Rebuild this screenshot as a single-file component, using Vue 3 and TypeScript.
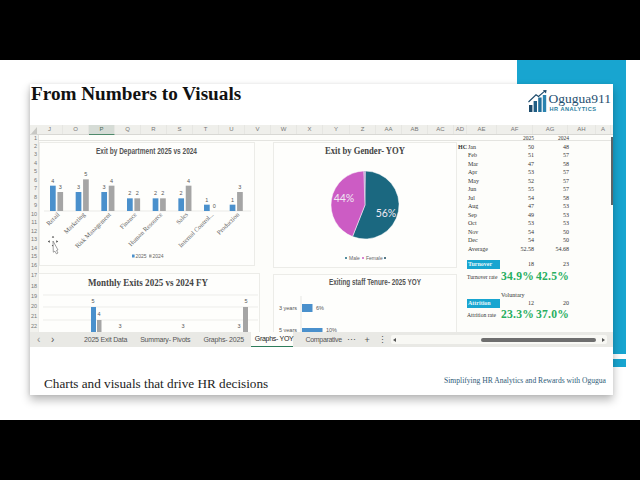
<template>
  <div class="page">
    <div class="black-bar"></div>
    <div class="stage">
      <div class="blue-main"></div>
      <div class="blue-small"></div>

      <div class="slide">
        <!-- header -->
        <header class="slide-head">
          <h1>From Numbers to Visuals</h1>
          <div class="logo">
            <svg width="21" height="22" viewBox="0 0 21 22">
              <rect x="1" y="15" width="3.4" height="7" fill="#1c4a6b" />
              <rect x="5.6" y="11" width="3.4" height="11" fill="#1f5d84" />
              <rect x="10.2" y="7.5" width="3.4" height="14.5" fill="#23709b" />
              <rect x="14.8" y="5" width="3.4" height="17" fill="#2a83b0" />
              <path d="M0.5 12 L8 4.8 L10.5 6.5 L17 0.8" fill="none" stroke="#1c4a6b" stroke-width="1.1" />
              <path d="M14.8 0.2 L18.6 0 L18 3.6 Z" fill="#1c4a6b" />
            </svg>
            <div class="logo-text">
              <div class="logo-name">Ogugua911</div>
              <div class="logo-sub">HR ANALYTICS</div>
            </div>
          </div>
        </header>

        <!-- spreadsheet -->
        <div class="sheet">
          <div class="col-head">
            <div class="corner"></div>
            <div
              v-for="c in columns"
              :key="c.name"
              class="col"
              :class="{ selected: c.name === 'P' }"
              :style="{ width: c.width + 'px' }"
            >{{ c.name }}</div>
          </div>

          <div class="sheet-body">
            <div class="row-nums">
              <div
                v-for="n in 22"
                :key="n"
                class="row-num"
                :class="{ first: n === 1, tall: n > 16, gap: n === 17 }"
              >{{ n }}</div>
            </div>

            <div class="cells">
              <div class="charts">
                <div class="chart-col left">
                  <div class="chart dept">
                    <svg width="216" height="124" viewBox="0 0 216 124">
                      <text x="107.5" y="12" class="title-sans" text-anchor="middle" textLength="101" lengthAdjust="spacingAndGlyphs">Exit by Department 2025 vs 2024</text>
                      <line x1="5" x2="212" y1="69" y2="69" stroke="#e2e2de" stroke-width="0.7" />
                      <g v-for="(d, i) in departments" :key="d.name">
                        <rect :x="11 + i * 25.67" :y="69 - d.a * 6.33" width="5.7" :height="d.a * 6.33" fill="#4a90cc" />
                        <rect :x="18.4 + i * 25.67" :y="69 - d.b * 6.33" width="5.7" :height="d.b * 6.33" fill="#a5a5a5" />
                        <text :x="13.8 + i * 25.67" :y="66 - d.a * 6.33" class="val" text-anchor="middle">{{ d.a }}</text>
                        <text :x="21.2 + i * 25.67" :y="66 - d.b * 6.33" class="val" text-anchor="middle">{{ d.b }}</text>
                        <text
                          class="axis"
                          text-anchor="end"
                          :transform="`translate(${21 + i * 25.67} 73) rotate(-45)`"
                        >{{ d.name }}</text>
                      </g>
                      <rect x="93" y="112.5" width="2.6" height="3" fill="#4a90cc" />
                      <text x="96.5" y="116" class="legend">2025</text>
                      <rect x="110" y="112.5" width="2.6" height="3" fill="#a5a5a5" />
                      <text x="113.5" y="116" class="legend">2024</text>
                      <!-- mouse cursor -->
                      <g fill="#222">
                        <path d="M14 94 l1.2 1.6 h-2.4 Z" />
                        <path d="M14 104.5 l1.2 -1.6 h-2.4 Z" />
                        <path d="M9 99.5 l1.6 -1.2 v2.4 Z" />
                        <path d="M19 99.5 l-1.6 -1.2 v2.4 Z" />
                      </g>
                      <path d="M14 99 l5 9 l-1.5 .5 l1.5 2.5 l-1.6 .8 l-1.5 -2.6 l-1.6 1 Z" fill="#fff" stroke="#777" stroke-width="0.7" />
                    </svg>
                  </div>
                  <div class="chart monthly">
                    <svg width="222" height="70" viewBox="0 0 222 70">
                      <text x="110" y="13" class="title-serif-small" text-anchor="middle" textLength="120" lengthAdjust="spacingAndGlyphs">Monthly Exits 2025 vs 2024 FY</text>
                      <line v-for="y in [22, 34, 47]" :key="y" x1="5" x2="220" :y1="y" :y2="y" stroke="#e6e6e2" stroke-width="0.7" />
                      <rect x="53" y="34" width="5" height="30" fill="#4a90cc" />
                      <rect x="59" y="47" width="4.5" height="20" fill="#a5a5a5" />
                      <rect x="205" y="34" width="5" height="30" fill="#a5a5a5" />
                      <text x="55" y="30" class="val" text-anchor="middle">5</text>
                      <text x="61" y="43" class="val" text-anchor="middle">4</text>
                      <text x="82" y="55" class="val" text-anchor="middle">3</text>
                      <text x="145" y="55" class="val" text-anchor="middle">3</text>
                      <text x="201" y="55" class="val" text-anchor="middle">3</text>
                      <text x="208" y="30" class="val" text-anchor="middle">5</text>
                    </svg>
                  </div>
                </div>

                <div class="chart-col right">
                  <div class="chart gender">
                    <svg width="184" height="126" viewBox="0 0 184 126">
                      <text x="92" y="12" class="title-serif" text-anchor="middle" textLength="80" lengthAdjust="spacingAndGlyphs">Exit by Gender- YOY</text>
                      <path d="M92 63 L92 29 A34 34 0 1 1 79.5 94.6 Z" fill="#1b6880" stroke="#fff" stroke-width="0.5" />
                      <path d="M92 63 L79.5 94.6 A34 34 0 0 1 90.8 29 Z" fill="#cc5cc4" stroke="#fff" stroke-width="0.5" />
                      <path d="M92 63 L90.8 29 A34 34 0 0 1 92.9 29 Z" fill="#c9b9dc" />
                      <text x="71" y="60" class="pie-label" text-anchor="middle">44%</text>
                      <text x="113" y="75" class="pie-label" text-anchor="middle">56%</text>
                      <circle cx="73" cy="116" r="1" fill="#1b6880" />
                      <text x="76" y="118" class="legend">Male</text>
                      <circle cx="90" cy="116" r="1" fill="#cc5cc4" />
                      <text x="93" y="118" class="legend">Female</text>
                      <circle cx="112" cy="116" r="1" fill="#1b4a5c" />
                    </svg>
                  </div>
                  <div class="chart tenure">
                    <svg width="184" height="70" viewBox="0 0 184 70">
                      <text x="102" y="11" class="title-sans" text-anchor="middle" textLength="92" lengthAdjust="spacingAndGlyphs">Exiting staff Tenure- 2025 YOY</text>
                      <line x1="28" x2="28" y1="22" y2="70" stroke="#dcdcd8" stroke-width="0.7" />
                      <rect x="29" y="30" width="10.5" height="8" fill="#4a90cc" />
                      <rect x="29" y="54" width="20.5" height="12" fill="#4a90cc" />
                      <text x="43" y="36" class="val">6%</text>
                      <text x="53" y="57.5" class="val">10%</text>
                      <text x="24" y="36" class="val" text-anchor="end">3 years</text>
                      <text x="24" y="57.5" class="val" text-anchor="end">5 years</text>
                    </svg>
                  </div>
                </div>
              </div>

              <!-- HC table -->
              <div class="table">
                <div class="t-row years">
                  <span></span><span></span><span class="num">2025</span><span class="num">2024</span>
                </div>
                <div v-for="(m, i) in months" :key="m.name" class="t-row">
                  <span class="hc">{{ i === 0 ? 'HC' : '' }}</span>
                  <span>{{ m.name }}</span>
                  <span class="num">{{ m.a }}</span>
                  <span class="num">{{ m.b }}</span>
                </div>
                <div class="t-row">
                  <span></span><span>Average</span><span class="num">52.58</span><span class="num">54.68</span>
                </div>

                <div class="t-row rate-top turnover">
                  <span class="chip">Turnover</span>
                  <span class="num">18</span><span class="num">23</span>
                </div>
                <div class="t-row rate">
                  <span class="rate-name">Turnover rate</span>
                  <span class="pct">34.9%</span><span class="pct">42.5%</span>
                </div>
                <div class="voluntary">Voluntary</div>
                <div class="t-row rate-top">
                  <span class="chip">Attrition</span>
                  <span class="num">12</span><span class="num">20</span>
                </div>
                <div class="t-row rate attrition">
                  <span class="rate-name">Attrition rate</span>
                  <span class="pct">23.3%</span><span class="pct">37.0%</span>
                </div>
              </div>
            </div>

            <div class="v-scroll"></div>
          </div>

          <!-- sheet tabs -->
          <div class="tab-bar">
            <span class="nav">‹</span>
            <span class="nav second">›</span>
            <span class="tab">2025 Exit Data</span>
            <span class="tab">Summary- Pivots</span>
            <span class="tab tight">Graphs- 2025</span>
            <span class="tab active">Graphs- YOY</span>
            <span class="tab last">Comparative</span>
            <span class="tool">⋯</span>
            <span class="tool">+</span>
            <span class="tool">⋮</span>
            <div class="h-scroll">
              <span class="arrow-left"></span>
              <span class="thumb"></span>
              <span class="arrow-right"></span>
            </div>
          </div>
        </div>

        <footer class="slide-foot">
          <span class="tagline">Charts and visuals that drive HR decisions</span>
          <span class="credit">Simplifying HR Analytics and Rewards with Ogugua</span>
        </footer>
      </div>
    </div>
    <div class="black-bar"></div>
  </div>
</template>

<script setup lang="ts">
const columns = [
  { name: 'J', width: 26 }, { name: 'O', width: 26 }, { name: 'P', width: 26 },
  { name: 'Q', width: 26 }, { name: 'R', width: 26 }, { name: 'S', width: 26 },
  { name: 'T', width: 26 }, { name: 'U', width: 26 }, { name: 'V', width: 26 },
  { name: 'W', width: 26 }, { name: 'X', width: 26 }, { name: 'Y', width: 27 },
  { name: 'Z', width: 26 }, { name: 'AA', width: 26 }, { name: 'AB', width: 26 },
  { name: 'AC', width: 26 }, { name: 'AD', width: 13 }, { name: 'AE', width: 30 },
  { name: 'AF', width: 36 }, { name: 'AG', width: 35 }, { name: 'AH', width: 28 },
  { name: 'A', width: 15 },
]

const departments = [
  { name: 'Retail', a: 4, b: 3 },
  { name: 'Marketing', a: 3, b: 5 },
  { name: 'Risk Management', a: 3, b: 4 },
  { name: 'Finance', a: 2, b: 2 },
  { name: 'Human Resource', a: 2, b: 2 },
  { name: 'Sales', a: 2, b: 4 },
  { name: 'Internal Control...', a: 1, b: 0 },
  { name: 'Production', a: 1, b: 3 },
]

const months = [
  { name: 'Jan', a: 50, b: 48 },
  { name: 'Feb', a: 51, b: 57 },
  { name: 'Mar', a: 47, b: 58 },
  { name: 'Apr', a: 53, b: 57 },
  { name: 'May', a: 52, b: 57 },
  { name: 'Jun', a: 55, b: 57 },
  { name: 'Jul', a: 54, b: 58 },
  { name: 'Aug', a: 47, b: 53 },
  { name: 'Sep', a: 49, b: 53 },
  { name: 'Oct', a: 53, b: 53 },
  { name: 'Nov', a: 54, b: 50 },
  { name: 'Dec', a: 54, b: 50 },
]
</script>

<style>
html, body {
  margin: 0;
  background: #000;
}
</style>

<style scoped>
.page {
  width: 640px;
  height: 480px;
  display: flex;
  flex-direction: column;
  overflow: hidden;
  font-family: "Liberation Sans", Arial, sans-serif;
}

.black-bar {
  height: 60px;
  background: #000;
}

.stage {
  position: relative;
  height: 360px;
  background: #fff;
  padding: 24px 0 0 30px;
  box-sizing: border-box;
}

.blue-main {
  position: absolute;
  left: 517px;
  top: 0;
  width: 109px;
  height: 294px;
  background: #18a5d0;
}

.blue-small {
  position: absolute;
  left: 613px;
  top: 299px;
  width: 13px;
  height: 8px;
  background: #18a5d0;
}

.slide {
  position: relative;
  width: 583px;
  height: 311px;
  background: #fff;
  box-shadow: 0 5px 9px rgba(0, 0, 0, 0.28), -1px 0 3px rgba(0, 0, 0, 0.08);
  display: flex;
  flex-direction: column;
}

.slide-head {
  height: 41px;
  display: flex;
  justify-content: space-between;
  align-items: flex-start;
  flex: none;
}

.slide-head h1 {
  margin: 0;
  padding: 0 0 0 1px;
  font-family: "Liberation Serif", serif;
  font-weight: 700;
  font-size: 19.2px;
  line-height: 20px;
  color: #111;
}

.logo {
  display: flex;
  align-items: flex-start;
  padding: 6px 2px 0 0;
}

.logo-name {
  font-family: "Liberation Serif", serif;
  font-size: 13.5px;
  line-height: 14px;
  color: #1f4f70;
  margin-top: 2px;
}

.logo-sub {
  font-size: 5.6px;
  line-height: 6px;
  letter-spacing: 0.5px;
  color: #2b7d9e;
  font-weight: 700;
  padding-left: 1px;
}

.sheet {
  height: 222px;
  flex: none;
  display: flex;
  flex-direction: column;
  background: #fdfdfa;
  overflow: hidden;
}

.col-head {
  height: 10px;
  display: flex;
  flex: none;
  background: #efefeb;
  border-bottom: 1px solid #d8d8d4;
  box-sizing: border-box;
}

.corner {
  width: 7px;
  flex: none;
  box-sizing: border-box;
  margin-top: 2px;
  height: 7px;
  border-right: 6px solid #c8c8c4;
  border-top: 7px solid transparent;
}

.col {
  flex: none;
  font-size: 6px;
  line-height: 9px;
  text-align: center;
  color: #777;
  box-sizing: border-box;
  border-right: 1px solid #e6e6e2;
}

.col.selected {
  background: #d6dcd6;
  border-bottom: 1px solid #4f8a6b;
  height: 10px;
  color: #4a6a58;
}

.sheet-body {
  position: relative;
  flex: 1;
  min-height: 0;
  display: flex;
  overflow: hidden;
}

.row-nums {
  width: 8px;
  flex: none;
  background: #f2f2ee;
  border-right: 1px solid #e0e0dc;
}

.row-num {
  height: 8.5px;
  font-size: 5.5px;
  line-height: 8.5px;
  text-align: right;
  padding-right: 1px;
  color: #777;
  overflow: hidden;
}

.row-num.first {
  height: 6.5px;
  line-height: 6.5px;
}

.row-num.tall {
  height: 10px;
  line-height: 10px;
}

.row-num.gap {
  height: 12px;
  line-height: 12px;
}

.cells {
  flex: 1;
  display: flex;
  padding-top: 7px;
  background: linear-gradient(#e4e4e0, #e4e4e0) 0 5px / 100% 1px no-repeat;
}

.charts {
  display: flex;
  width: 418px;
  flex: none;
}

.chart-col {
  display: flex;
  flex-direction: column;
}

.chart-col.left {
  width: 234px;
  flex: none;
}

.chart-col.right {
  width: 184px;
  flex: none;
}

.chart {
  flex: none;
  background: #fefefc;
  border: 1px solid #ecece8;
  box-sizing: border-box;
  overflow: hidden;
}

.chart svg {
  display: block;
  margin: -1px;
}

.dept {
  width: 216px;
  height: 124px;
}

.monthly {
  width: 222px;
  margin-top: 7px;
  height: 70px;
  margin-left: -1px;
}

.gender {
  height: 126px;
}

.tenure {
  margin-top: 6px;
  height: 70px;
}

.title-sans {
  font-family: "Liberation Sans", sans-serif;
  font-weight: 700;
  font-size: 8.8px;
  fill: #555;
}

.title-serif {
  font-family: "Liberation Serif", serif;
  font-weight: 700;
  font-size: 10px;
  fill: #444;
}

.title-serif-small {
  font-family: "Liberation Serif", serif;
  font-weight: 700;
  font-size: 9.6px;
  fill: #444;
}

.val {
  font-family: "Liberation Sans", sans-serif;
  font-size: 5.5px;
  fill: #555;
}

.axis {
  font-family: "Liberation Serif", serif;
  font-size: 6.5px;
  fill: #666;
}

.legend {
  font-family: "Liberation Sans", sans-serif;
  font-size: 5px;
  fill: #666;
}

.pie-label {
  font-family: Lato, sans-serif;
  font-size: 10.5px;
  fill: #f0e9f2;
}

.table {
  width: 155px;
  flex: none;
  margin-top: -7px;
  font-family: "Liberation Serif", serif;
  font-size: 6px;
  color: #333;
}

.t-row {
  display: grid;
  grid-template-columns: 11px 38px 28px 35px;
  height: 8.5px;
  line-height: 8.5px;
  align-items: center;
}

.years {
  height: 7.5px;
  line-height: 7.5px;
  font-size: 5.5px;
}

.hc {
  font-weight: 700;
  padding-left: 1px;
}

.num {
  text-align: right;
}

.rate-top {
  grid-template-columns: 33px 34px 35px;
  margin-left: 10px;
  height: 9px;
  line-height: 9px;
}

.turnover {
  margin-top: 6.5px;
}

.chip {
  background: #18a5d0;
  color: #e8f7fb;
  font-size: 6px;
  font-weight: 700;
  height: 9px;
  padding-left: 1px;
}

.rate {
  grid-template-columns: 34px 33px 35px;
  margin-left: 10px;
  height: 14px;
  line-height: 14px;
  margin-top: 1px;
}

.rate.attrition {
  margin-top: 0;
}

.rate-name {
  font-size: 5.6px;
  white-space: nowrap;
}

.pct {
  font-size: 11.6px;
  font-weight: 700;
  color: #27ae60;
  text-align: right;
  letter-spacing: 0.2px;
}

.voluntary {
  height: 10px;
  line-height: 10px;
  margin: 6px 0 -1px;
  padding-left: 44px;
}

.v-scroll {
  position: absolute;
  right: 0;
  top: 2px;
  width: 2px;
  height: 68px;
  background: #5c6468;
}

.tab-bar {
  height: 15px;
  flex: none;
  background: #e9e9e5;
  display: flex;
  align-items: center;
  font-size: 7px;
  letter-spacing: -0.2px;
  color: #555;
  padding-left: 7px;
  box-sizing: border-box;
  white-space: nowrap;
}

.nav {
  width: 14px;
  font-size: 10px;
  line-height: 14px;
  color: #888;
}

.nav.second {
  width: 33px;
  color: #555;
}

.tab {
  margin-right: 13px;
}

.tab.tight {
  margin-right: 11px;
}

.tab.active {
  background: #fdfdfa;
  height: 15px;
  line-height: 14px;
  color: #222;
  border-bottom: 1px solid #2e7d5b;
  box-sizing: border-box;
  margin: 0 12px 0 -4px;
  padding: 0 0 0 4px;
  letter-spacing: -0.3px;
}

.tab.last {
  margin-right: 2px;
  letter-spacing: -0.3px;
}

.tool {
  width: 15.5px;
  flex: none;
  text-align: center;
  font-size: 9px;
  color: #555;
}

.h-scroll {
  margin-left: 1px;
  width: 216px;
  height: 9px;
  background: #f8f8f4;
  border-radius: 2px;
  display: flex;
  align-items: center;
}

.arrow-left {
  margin-left: 2px;
  border-right: 3px solid #555;
  border-top: 2.5px solid transparent;
  border-bottom: 2.5px solid transparent;
}

.thumb {
  margin-left: 85px;
  width: 115px;
  height: 4px;
  border-radius: 2px;
  background: #6e6e6e;
}

.arrow-right {
  margin-left: 6px;
  border-left: 3px solid #555;
  border-top: 2.5px solid transparent;
  border-bottom: 2.5px solid transparent;
}

.slide-foot {
  flex: 1;
  display: flex;
  justify-content: space-between;
  align-items: flex-end;
  padding: 0 7px 4px 14px;
  font-family: "Liberation Serif", serif;
}

.tagline {
  font-size: 13.2px;
  line-height: 15px;
  color: #222;
}

.credit {
  font-size: 7.6px;
  line-height: 10px;
  color: #2f5b78;
  padding-bottom: 5px;
}
</style>
